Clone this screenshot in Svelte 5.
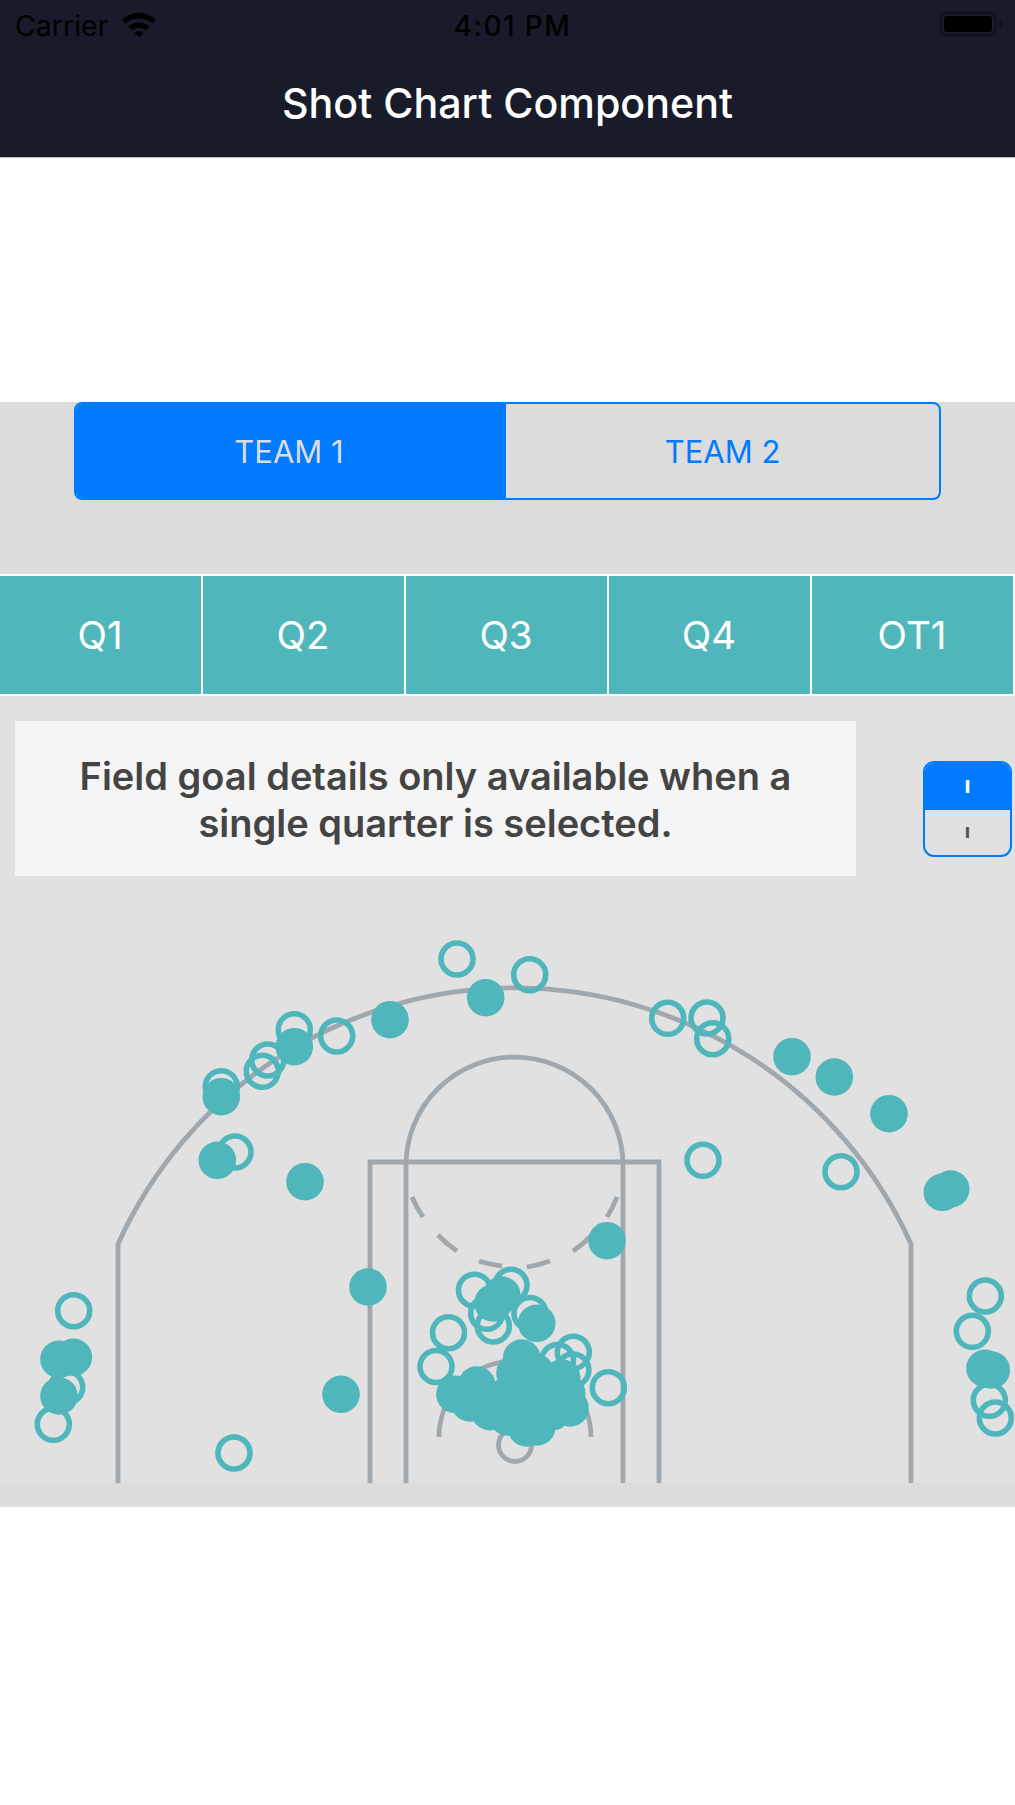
<script>
  const open = [
    [457,959],[336.7,1036],[294.3,1029.7],[267.7,1060],[262.3,1071.3],[221.3,1086.7],[235,1152],
    [529.7,974.7],[667.7,1018.3],[707,1018],[712.7,1038.7],[703,1160.3],[841,1171.7],
    [73.7,1310.7],[66.7,1387.3],[53.3,1424.3],[234,1453],
    [985.3,1296],[972.3,1331.3],[989.3,1400.3],[995.3,1418],
    [474.5,1290.2],[511,1285.3],[448.5,1332.7],[436,1366.5],[608.3,1387.7],[486.7,1313.3],[493.3,1326],
    [530,1313.5],[573.3,1352.3],[557.5,1360.5],[572.9,1370]
  ];
  const made = [
    [485.7,997.7],[390,1019.7],[294.3,1046.7],[221.3,1096.7],[217.3,1160.3],[305,1181.7],
    [792,1056.7],[834.3,1077],[889,1113.7],[950.7,1189],[942.3,1192.3],[607,1240.7],
    [59,1359.3],[73.3,1357.3],[59,1396],[368,1287],[341,1394.3],
    [985,1368.3],[991.3,1370],
    [501.7,1295],[493,1303],[536.7,1323.3],[521.7,1358],[515,1373],
    [455,1394.3],[476.7,1385],[470,1403],[490,1411.7],[508,1417],[526.7,1428],[536.7,1427],
    [570,1408],[561.7,1378],[566.7,1393],[530,1393],[546.7,1403],[552,1412],[520,1402],
    [541,1383],[505,1397],[552,1385],[535,1372]
  ];
  const dashes = [
    [412,1197,423,1217],[438,1235,457,1251],[479,1261,502,1266],
    [527,1267,550,1261],[573,1251,592,1235],[607,1217,617,1197]
  ];
  const quarters = ['Q1','Q2','Q3','Q4','OT1'];
</script>

<div class="page">
  <header class="top">
    <div class="status">
      <div class="carrier">
        <span>Carrier</span>
        <svg class="wifi" viewBox="0 0 34 24" width="34" height="24" aria-hidden="true">
          <path d="M0 6.6 A25 25 0 0 1 34 6.6 L30.4 10.6 A20 20 0 0 0 3.6 10.6 Z" fill="#000"/>
          <path d="M6.4 13.4 A16 16 0 0 1 27.6 13.4 L24 17.3 A11 11 0 0 0 10 17.3 Z" fill="#000"/>
          <path d="M12.6 19.8 A7 7 0 0 1 21.4 19.8 L17 24 Z" fill="#000"/>
        </svg>
      </div>
      <span class="time">4:01 PM</span>
      <div class="battery"><i></i></div>
    </div>
    <h1>Shot Chart Component</h1>
  </header>

  <div class="spacer"></div>

  <section class="teams">
    <div class="segment">
      <div class="seg on">TEAM 1</div>
      <div class="seg">TEAM 2</div>
    </div>
  </section>

  <nav class="quarters">
    {#each quarters as q}
      <div class="q">{q}</div>
    {/each}
  </nav>

  <section class="court">
    <div class="info">
      <p class="notice">Field goal details only available when a<br />single quarter is selected.</p>
      <div class="toggle">
        <div class="t on">I</div>
        <div class="t">I</div>
      </div>
    </div>
    <svg class="chart" viewBox="0 876 1015 607" width="1015" height="607" aria-hidden="true">
      <g fill="none" stroke="#a0a8ae" stroke-width="4.8">
        <path d="M118 1483 V1244 A435 435 0 0 1 911 1244 V1483" />
        <path d="M370 1483 V1162 H659 V1483" />
        <path d="M406 1483 V1165.5 A108.5 108.5 0 0 1 623 1165.5 V1483" />
        <path d="M439 1437 A76 76 0 0 1 591 1437" />
        <circle cx="515" cy="1445" r="16.5" />
        {#each dashes as d}
          <path d="M{d[0]} {d[1]} A109 109 0 0 0 {d[2]} {d[3]}" />
        {/each}
      </g>
      {#each open as p}
        <circle cx={p[0]} cy={p[1]} r="16" fill="none" stroke="#4fb7bc" stroke-width="5.6" />
      {/each}
      {#each made as p}
        <circle cx={p[0]} cy={p[1]} r="18.8" fill="#4fb7bc" />
      {/each}
    </svg>
  </section>

  <div class="foot"></div>
</div>

<style>
  :global(body) {
    margin: 0;
    background: #fff;
  }
  .page {
    width: 1015px;
    height: 1805px;
    background: #fff;
    font-family: Inter, "Liberation Sans", sans-serif;
    overflow: hidden;
  }
  .top {
    height: 157px;
    background: #181c2a;
    border-bottom: 1px solid #b9bbbf;
    display: flex;
    flex-direction: column;
  }
  .status {
    height: 54px;
    position: relative;
    display: flex;
    align-items: center;
    justify-content: center;
    color: #000;
  }
  .carrier {
    position: absolute;
    left: 15px;
    top: 11px;
    display: flex;
    align-items: center;
    gap: 14px;
    font-size: 28.5px;
    line-height: 30px;
  }
  .wifi {
    margin-top: -2px;
  }
  .time {
    font-size: 28px;
    font-weight: 500;
    letter-spacing: 1.4px;
    margin: -2px 0 0 10px;
  }
  .battery {
    position: absolute;
    left: 939px;
    top: 11px;
    width: 58px;
    height: 26px;
    padding: 2px;
    border: 3px solid #10131e;
    border-radius: 8px;
    box-sizing: border-box;
  }
  .battery i {
    display: block;
    width: 100%;
    height: 100%;
    background: #000;
    border-radius: 3px;
  }
  .battery::after {
    content: "";
    position: absolute;
    left: 57px;
    top: 6px;
    width: 4px;
    height: 9px;
    background: #10131e;
    border-radius: 0 3px 3px 0;
  }
  h1 {
    margin: 0;
    flex: 1;
    display: flex;
    align-items: center;
    justify-content: center;
    color: #fff;
    font-size: 41.2px;
    font-weight: 500;
    padding-bottom: 6px;
  }
  .spacer {
    height: 244px;
  }
  .teams {
    height: 172px;
    background: #dcdcdc;
    box-sizing: border-box;
    padding: 0 74px;
  }
  .segment {
    display: flex;
    height: 98px;
    width: 867px;
    box-sizing: border-box;
    border: 2.7px solid #007aff;
    border-radius: 8px;
    overflow: hidden;
  }
  .seg {
    flex: 1 1 0;
    box-sizing: border-box;
    display: flex;
    align-items: center;
    justify-content: center;
    color: #007aff;
    font-size: 31px;
    font-weight: 400;
  }
  .seg.on {
    flex: 0 0 430px;
    background: #007aff;
    color: #dcdcdc;
    padding-right: 4px;
  }
  .quarters {
    display: flex;
    height: 122px;
    box-sizing: border-box;
    background: #4fb7bc;
    border-top: 2px solid #fff;
    border-bottom: 2px solid #fff;
  }
  .q {
    flex: 1 1 0;
    box-sizing: border-box;
    display: flex;
    align-items: center;
    justify-content: center;
    color: #fff;
    font-size: 38.5px;
    padding-right: 1px;
    border-right: 2px solid #fff;
  }
  .court {
    height: 787px;
    background: #e1e1e1;
    box-sizing: border-box;
    padding-top: 25px;
  }
  .info {
    display: flex;
    align-items: flex-start;
    height: 155px;
    padding-left: 15px;
  }
  .notice {
    margin: 0;
    width: 841px;
    height: 155px;
    background: #f5f5f5;
    color: #444;
    font-size: 38px;
    font-weight: 600;
    line-height: 47px;
    text-align: center;
    display: flex;
    align-items: center;
    justify-content: center;
    box-sizing: border-box;
    padding-top: 2px;
  }
  .toggle {
    width: 89px;
    height: 96px;
    margin: 40px 0 0 67px;
    box-sizing: border-box;
    border: 2.7px solid #007aff;
    border-radius: 11px;
    overflow: hidden;
    display: flex;
    flex-direction: column;
    color: #555;
    font-size: 15px;
    font-weight: 900;
  }
  .t {
    flex: 1 1 0;
    display: flex;
    align-items: center;
    justify-content: center;
  }
  .t.on {
    flex: 0 0 47px;
    background: #007aff;
    color: #f8f8f8;
    font-size: 17px;
  }
  .chart {
    display: block;
  }
  .foot {
    height: 24px;
    background: #dcdcdc;
  }
</style>
